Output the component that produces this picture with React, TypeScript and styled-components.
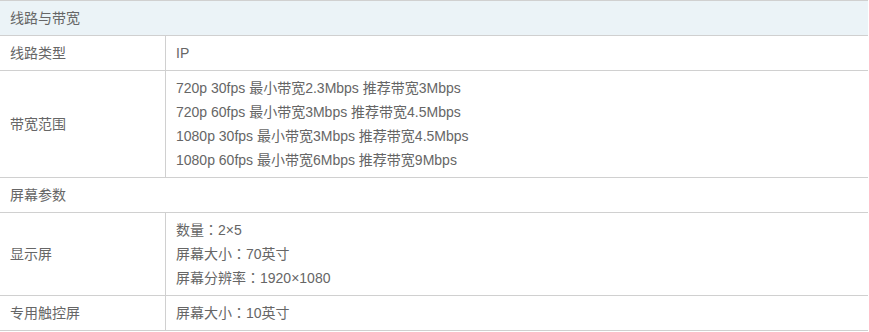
import React from 'react';
import styled, { createGlobalStyle } from 'styled-components';

const GlobalStyle = createGlobalStyle`
  body {
    margin: 0;
    background: #fff;
    font-family: "Liberation Sans", Arial, "Noto Sans CJK SC", sans-serif;
  }
`;

const SpecTable = styled.table`
  width: 868px;
  border-collapse: collapse;
  font-size: 14px;
  color: #666;
  border-top: 1px solid #d0d0d0;
`;

const Row = styled.tr`
  border-bottom: 1px solid #d0d0d0;
`;

const SectionCell = styled.td<{ shaded?: boolean }>`
  background: ${({ shaded }) => (shaded ? '#ebf3f7' : 'transparent')};
  padding: 5px 10px;
  line-height: 24px;
  height: 24px;
`;

const LabelCell = styled.td`
  width: 145px;
  padding: 5px 10px;
  line-height: 24px;
  border-right: 1px solid #d0d0d0;
  vertical-align: middle;
`;

const ValueCell = styled.td`
  padding: 5px 10px;
  line-height: 24px;
`;

const Line = styled.div`
  height: 24px;
  white-space: nowrap;
`;

// full-width colon centred in its cell, as in the original font
const Colon = styled.span`
  font-family: "Noto Sans CJK TC", sans-serif;
  line-height: 1;
`;

type Spec = { label: string; lines: string[] };

const network: Spec[] = [
  { label: '线路类型', lines: ['IP'] },
  {
    label: '带宽范围',
    lines: [
      '720p 30fps 最小带宽2.3Mbps 推荐带宽3Mbps',
      '720p 60fps 最小带宽3Mbps 推荐带宽4.5Mbps',
      '1080p 30fps 最小带宽3Mbps 推荐带宽4.5Mbps',
      '1080p 60fps 最小带宽6Mbps 推荐带宽9Mbps',
    ],
  },
];

const screens: Spec[] = [
  {
    label: '显示屏',
    lines: ['数量：2×5', '屏幕大小：70英寸', '屏幕分辨率：1920×1080'],
  },
  { label: '专用触控屏', lines: ['屏幕大小：10英寸'] },
];

const renderLine = (text: string) => {
  const parts = text.split('：');
  if (parts.length < 2) return text;
  return (
    <>
      {parts[0]}
      <Colon>：</Colon>
      {parts[1]}
    </>
  );
};

const SpecRows = ({ items }: { items: Spec[] }) => (
  <>
    {items.map(item => (
      <Row key={item.label}>
        <LabelCell>{item.label}</LabelCell>
        <ValueCell>
          {item.lines.map(l => (
            <Line key={l}>{renderLine(l)}</Line>
          ))}
        </ValueCell>
      </Row>
    ))}
  </>
);

export default function App() {
  return (
    <>
      <GlobalStyle />
      <SpecTable>
        <tbody>
          <Row>
            <SectionCell colSpan={2} shaded>线路与带宽</SectionCell>
          </Row>
          <SpecRows items={network} />
          <Row>
            <SectionCell colSpan={2}>屏幕参数</SectionCell>
          </Row>
          <SpecRows items={screens} />
        </tbody>
      </SpecTable>
    </>
  );
}
